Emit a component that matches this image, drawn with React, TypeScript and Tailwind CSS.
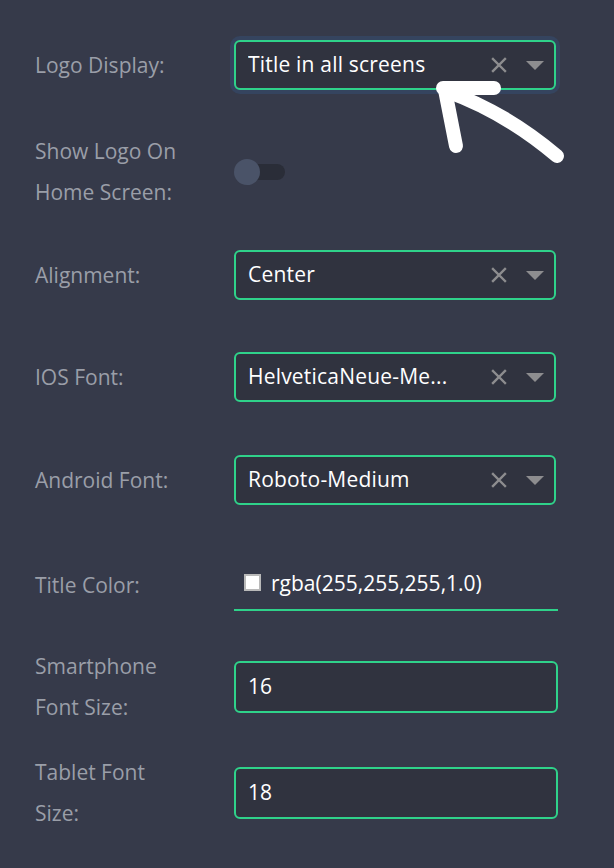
import React from "react";

const SelectField = ({value, focused}: { value: string; focused?: boolean }) => (
    <div
        className={`flex items-center w-[322px] h-[50px] pl-[12px] pr-[10px] border-2 border-[#2fd28a] rounded-[6px] bg-[#30333f] ${focused ? "shadow-[0_0_0_4px_#35445f]" : ""}`}>
        <span className="flex-1 text-[21px] text-white truncate tracking-[0.2px]">{value}</span>
        <svg width="16" height="16" viewBox="0 0 16 16" className="mr-[19px]">
            <path d="M2 2 L14 14 M14 2 L2 14" stroke="#8d8d8f" strokeWidth="2.4" strokeLinecap="square"/>
        </svg>
        <svg width="18" height="9" viewBox="0 0 18 9">
            <path d="M0 0 L18 0 L9 9 Z" fill="#8d8d8f"/>
        </svg>
    </div>
);

const TextField = ({value}: { value: string }) => (
    <div
        className="flex items-center w-[324px] h-[52px] pl-[12px] border-2 border-[#2fd28a] rounded-[6px] bg-[#30333f]">
        <span className="text-[21px] text-white">{value}</span>
    </div>
);

const Label = ({children}: { children: React.ReactNode }) => (
    <div className="w-[199px] shrink-0 text-[21px] leading-[41px] text-[#9a9ea8]">{children}</div>
);

const App = () => {
    return (
        <div className="relative w-[614px] h-[868px] overflow-hidden bg-[#363a4a] pl-[35px] pt-[39px]"
             style={{fontFamily: '"Open Sans", sans-serif'}}>
            <div className="flex flex-col">
                <div className="flex items-center h-[52px]">
                    <Label>Logo Display:</Label>
                    <SelectField value="Title in all screens" focused/>
                </div>

                <div className="flex items-center h-[52px] mt-[55px]">
                    <Label>Show Logo On<br/>Home Screen:</Label>
                    <div className="relative w-[52px] h-[26px]">
                        <div className="absolute left-[7px] top-[5px] w-[44px] h-[16px] rounded-full bg-[#2a2d38]"/>
                        <div className="absolute left-0 top-0 w-[26px] h-[26px] rounded-full bg-[#4a5368]"/>
                    </div>
                </div>

                <div className="flex items-center h-[52px] mt-[51px]">
                    <Label>Alignment:</Label>
                    <SelectField value="Center"/>
                </div>

                <div className="flex items-center h-[52px] mt-[50px]">
                    <Label>IOS Font:</Label>
                    <SelectField value="HelveticaNeue-Me..."/>
                </div>

                <div className="flex items-center h-[52px] mt-[51px]">
                    <Label>Android Font:</Label>
                    <SelectField value="Roboto-Medium"/>
                </div>

                <div className="flex items-center h-[52px] mt-[53px]">
                    <Label>Title Color:</Label>
                    <div className="relative w-[324px] h-[52px] flex items-center pl-[10px] border-b-2 border-[#2fd28a]">
                        <div className="w-[17px] h-[17px] bg-white border-2 border-[#b9b9b9] mt-[-4px]"/>
                        <span className="ml-[10px] text-[21px] text-white">rgba(255,255,255,1.0)</span>
                    </div>
                </div>

                <div className="flex items-center h-[52px] mt-[50px]">
                    <Label>Smartphone<br/>Font Size:</Label>
                    <TextField value="16"/>
                </div>

                <div className="flex items-center h-[52px] mt-[54px]">
                    <Label>Tablet Font<br/>Size:</Label>
                    <TextField value="18"/>
                </div>
            </div>

            {/* hand-drawn pointer arrow */}
            <svg className="absolute left-0 top-0 pointer-events-none" width="614" height="868" viewBox="0 0 614 868">
                <g stroke="#ffffff" strokeWidth="14" strokeLinecap="round" fill="none">
                    <path d="M443 88 L494 88"/>
                    <path d="M445 90 L456 146"/>
                    <path d="M446 91 Q505 112 557 156"/>
                </g>
            </svg>
        </div>
    );
};

export default App;
